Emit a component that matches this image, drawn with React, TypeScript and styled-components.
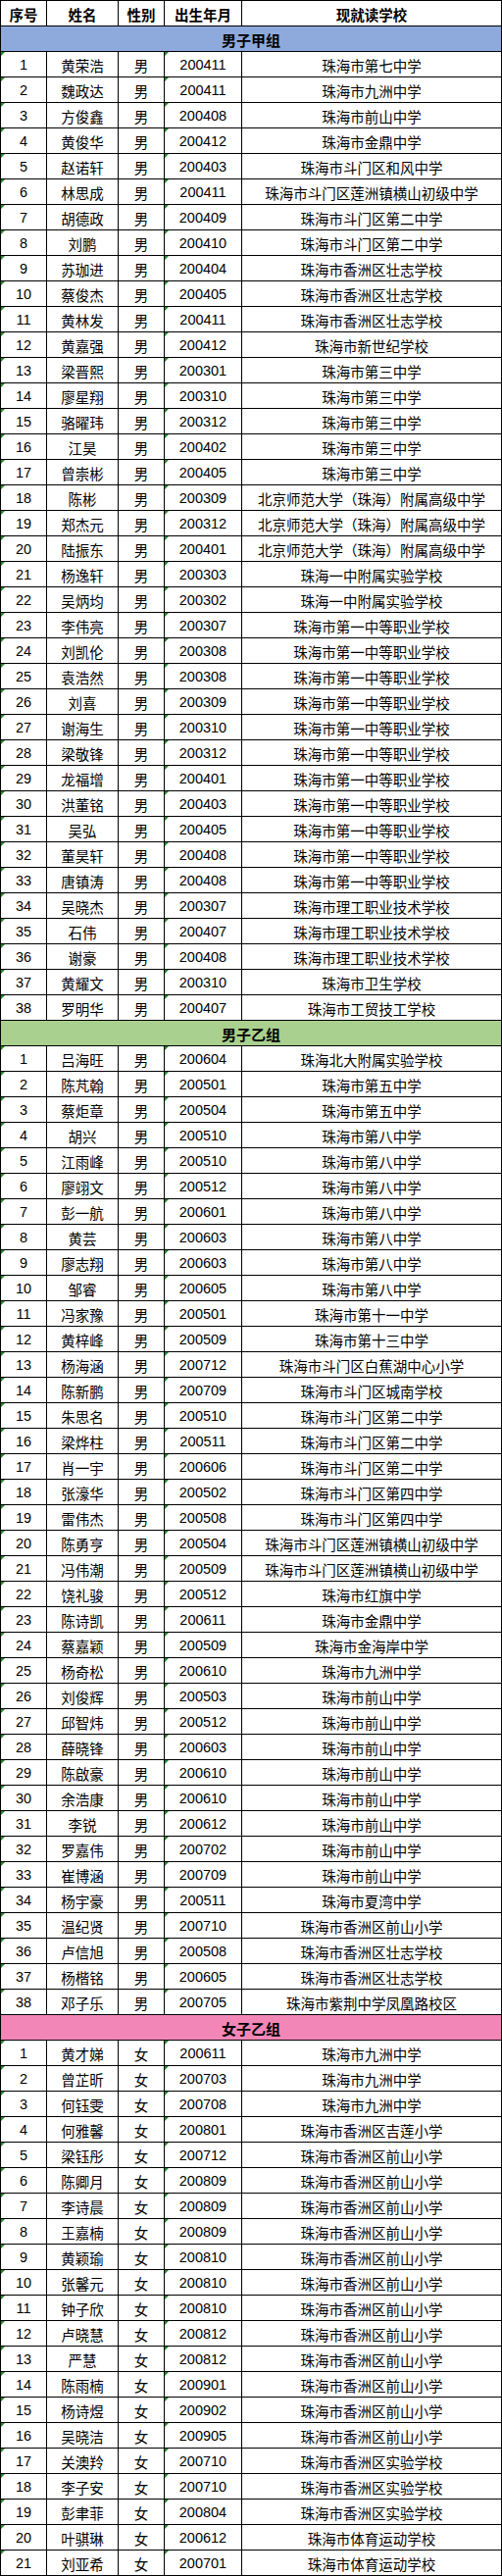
import React from "react";
import styled, { createGlobalStyle } from "styled-components";

const GlobalStyle = createGlobalStyle`
  html, body { margin: 0; padding: 0; background: #ffffff; }
  body { font-family: "Liberation Sans", "Noto Sans CJK SC", sans-serif; color: #000; }
`;

type Row = [string, string, string];
type Section = { title: string; color: string; gender: string; rows: Row[] };

const S1 = "珠海市第一中等职业学校";
const S2 = "北京师范大学（珠海）附属高级中学";
const S3 = "珠海市香洲区壮志学校";
const S4 = "珠海市第三中学";
const S5 = "珠海市理工职业技术学校";
const S6 = "珠海市第八中学";
const S7 = "珠海市斗门区第二中学";
const S8 = "珠海市前山中学";
const S9 = "珠海市香洲区前山小学";
const S10 = "珠海市九洲中学";
const S11 = "珠海市斗门区莲洲镇横山初级中学";
const S12 = "珠海市香洲区实验学校";

const sections: Section[] = [
  {
    title: "男子甲组",
    color: "#8EA9DB",
    gender: "男",
    rows: [
      ["黄荣浩", "200411", "珠海市第七中学"],
      ["魏政达", "200411", S10],
      ["方俊鑫", "200408", S8],
      ["黄俊华", "200412", "珠海市金鼎中学"],
      ["赵诺轩", "200403", "珠海市斗门区和风中学"],
      ["林思成", "200411", S11],
      ["胡德政", "200409", S7],
      ["刘鹏", "200410", S7],
      ["苏珈进", "200404", S3],
      ["蔡俊杰", "200405", S3],
      ["黄林发", "200411", S3],
      ["黄嘉强", "200412", "珠海市新世纪学校"],
      ["梁晋熙", "200301", S4],
      ["廖星翔", "200310", S4],
      ["骆曜玮", "200312", S4],
      ["江昊", "200402", S4],
      ["曾崇彬", "200405", S4],
      ["陈彬", "200309", S2],
      ["郑杰元", "200312", S2],
      ["陆振东", "200401", S2],
      ["杨逸轩", "200303", "珠海一中附属实验学校"],
      ["吴炳均", "200302", "珠海一中附属实验学校"],
      ["李伟亮", "200307", S1],
      ["刘凯伦", "200308", S1],
      ["袁浩然", "200308", S1],
      ["刘喜", "200309", S1],
      ["谢海生", "200310", S1],
      ["梁敬锋", "200312", S1],
      ["龙福增", "200401", S1],
      ["洪董铭", "200403", S1],
      ["吴弘", "200405", S1],
      ["董昊轩", "200408", S1],
      ["唐镇涛", "200408", S1],
      ["吴晓杰", "200307", S5],
      ["石伟", "200407", S5],
      ["谢豪", "200408", S5],
      ["黄耀文", "200310", "珠海市卫生学校"],
      ["罗明华", "200407", "珠海市工贸技工学校"],
    ],
  },
  {
    title: "男子乙组",
    color: "#A9D08E",
    gender: "男",
    rows: [
      ["吕海旺", "200604", "珠海北大附属实验学校"],
      ["陈芃翰", "200501", "珠海市第五中学"],
      ["蔡炬章", "200504", "珠海市第五中学"],
      ["胡兴", "200510", S6],
      ["江雨峰", "200510", S6],
      ["廖翊文", "200512", S6],
      ["彭一航", "200601", S6],
      ["黄芸", "200603", S6],
      ["廖志翔", "200603", S6],
      ["邹睿", "200605", S6],
      ["冯家豫", "200501", "珠海市第十一中学"],
      ["黄梓峰", "200509", "珠海市第十三中学"],
      ["杨海涵", "200712", "珠海市斗门区白蕉湖中心小学"],
      ["陈新鹏", "200709", "珠海市斗门区城南学校"],
      ["朱思名", "200510", S7],
      ["梁烨柱", "200511", S7],
      ["肖一宇", "200606", S7],
      ["张濠华", "200502", "珠海市斗门区第四中学"],
      ["雷伟杰", "200508", "珠海市斗门区第四中学"],
      ["陈勇亨", "200504", S11],
      ["冯伟潮", "200509", S11],
      ["饶礼骏", "200512", "珠海市红旗中学"],
      ["陈诗凯", "200611", "珠海市金鼎中学"],
      ["蔡嘉颖", "200509", "珠海市金海岸中学"],
      ["杨奇松", "200610", S10],
      ["刘俊辉", "200503", S8],
      ["邱智炜", "200512", S8],
      ["薛晓锋", "200603", S8],
      ["陈啟豪", "200610", S8],
      ["余浩康", "200610", S8],
      ["李锐", "200612", S8],
      ["罗嘉伟", "200702", S8],
      ["崔博涵", "200709", S8],
      ["杨宇豪", "200511", "珠海市夏湾中学"],
      ["温纪贤", "200710", S9],
      ["卢信旭", "200508", S3],
      ["杨楷铭", "200605", S3],
      ["邓子乐", "200705", "珠海市紫荆中学凤凰路校区"],
    ],
  },
  {
    title: "女子乙组",
    color: "#F287B7",
    gender: "女",
    rows: [
      ["黄才娣", "200611", S10],
      ["曾芷昕", "200703", S10],
      ["何钰雯", "200708", S10],
      ["何雅馨", "200801", "珠海市香洲区吉莲小学"],
      ["梁钰彤", "200712", S9],
      ["陈卿月", "200809", S9],
      ["李诗晨", "200809", S9],
      ["王嘉楠", "200809", S9],
      ["黄颖瑜", "200810", S9],
      ["张馨元", "200810", S9],
      ["钟子欣", "200810", S9],
      ["卢晓慧", "200812", S9],
      ["严慧", "200812", S9],
      ["陈雨楠", "200901", S9],
      ["杨诗煜", "200902", S9],
      ["吴晓洁", "200905", S9],
      ["关澳羚", "200710", S12],
      ["李子安", "200710", S12],
      ["彭聿菲", "200804", S12],
      ["叶骐琳", "200612", "珠海市体育运动学校"],
      ["刘亚希", "200701", "珠海市体育运动学校"],
    ],
  },
];

const Sheet = styled.div`
  display: grid;
  grid-template-columns: 47px 73px 47px 79px 265px;
  grid-auto-rows: 26px;
  width: 512px;
  box-sizing: border-box;
  border-left: 1px solid #000;
  border-top: 1px solid #000;
`;

const Cell = styled.div<{ $flag?: boolean; $bold?: boolean }>`
  position: relative;
  box-sizing: border-box;
  border-right: 1px solid #000;
  border-bottom: 1px solid #000;
  display: flex;
  align-items: center;
  justify-content: center;
  font-size: 14.5px;
  font-weight: ${(p) => (p.$bold ? 700 : 400)};
  white-space: nowrap;
  overflow: hidden;
  padding-top: 1px;
  &::before {
    content: "";
    display: ${(p) => (p.$flag ? "block" : "none")};
    position: absolute;
    left: 0;
    top: 0;
    width: 0;
    height: 0;
    border-top: 4px solid #1f8a1f;
    border-right: 4px solid transparent;
  }
`;

const SectionBar = styled.div<{ $bg: string }>`
  grid-column: 1 / -1;
  box-sizing: border-box;
  border-right: 1px solid #000;
  border-bottom: 1px solid #000;
  background: ${(p) => p.$bg};
  display: flex;
  align-items: center;
  justify-content: center;
  font-size: 15px;
  font-weight: 700;
  padding-top: 1px;
`;

const headers = ["序号", "姓名", "性别", "出生年月", "现就读学校"];

export default function App() {
  return (
    <>
      <GlobalStyle />
      <Sheet>
        {headers.map((h) => (
          <Cell key={h} $bold>
            {h}
          </Cell>
        ))}
        {sections.map((sec) => (
          <React.Fragment key={sec.title}>
            <SectionBar $bg={sec.color}>{sec.title}</SectionBar>
            {sec.rows.map((r, i) => (
              <React.Fragment key={sec.title + i}>
                <Cell $flag>{i + 1}</Cell>
                <Cell>{r[0]}</Cell>
                <Cell>{sec.gender}</Cell>
                <Cell $flag>{r[1]}</Cell>
                <Cell>{r[2]}</Cell>
              </React.Fragment>
            ))}
          </React.Fragment>
        ))}
      </Sheet>
    </>
  );
}
